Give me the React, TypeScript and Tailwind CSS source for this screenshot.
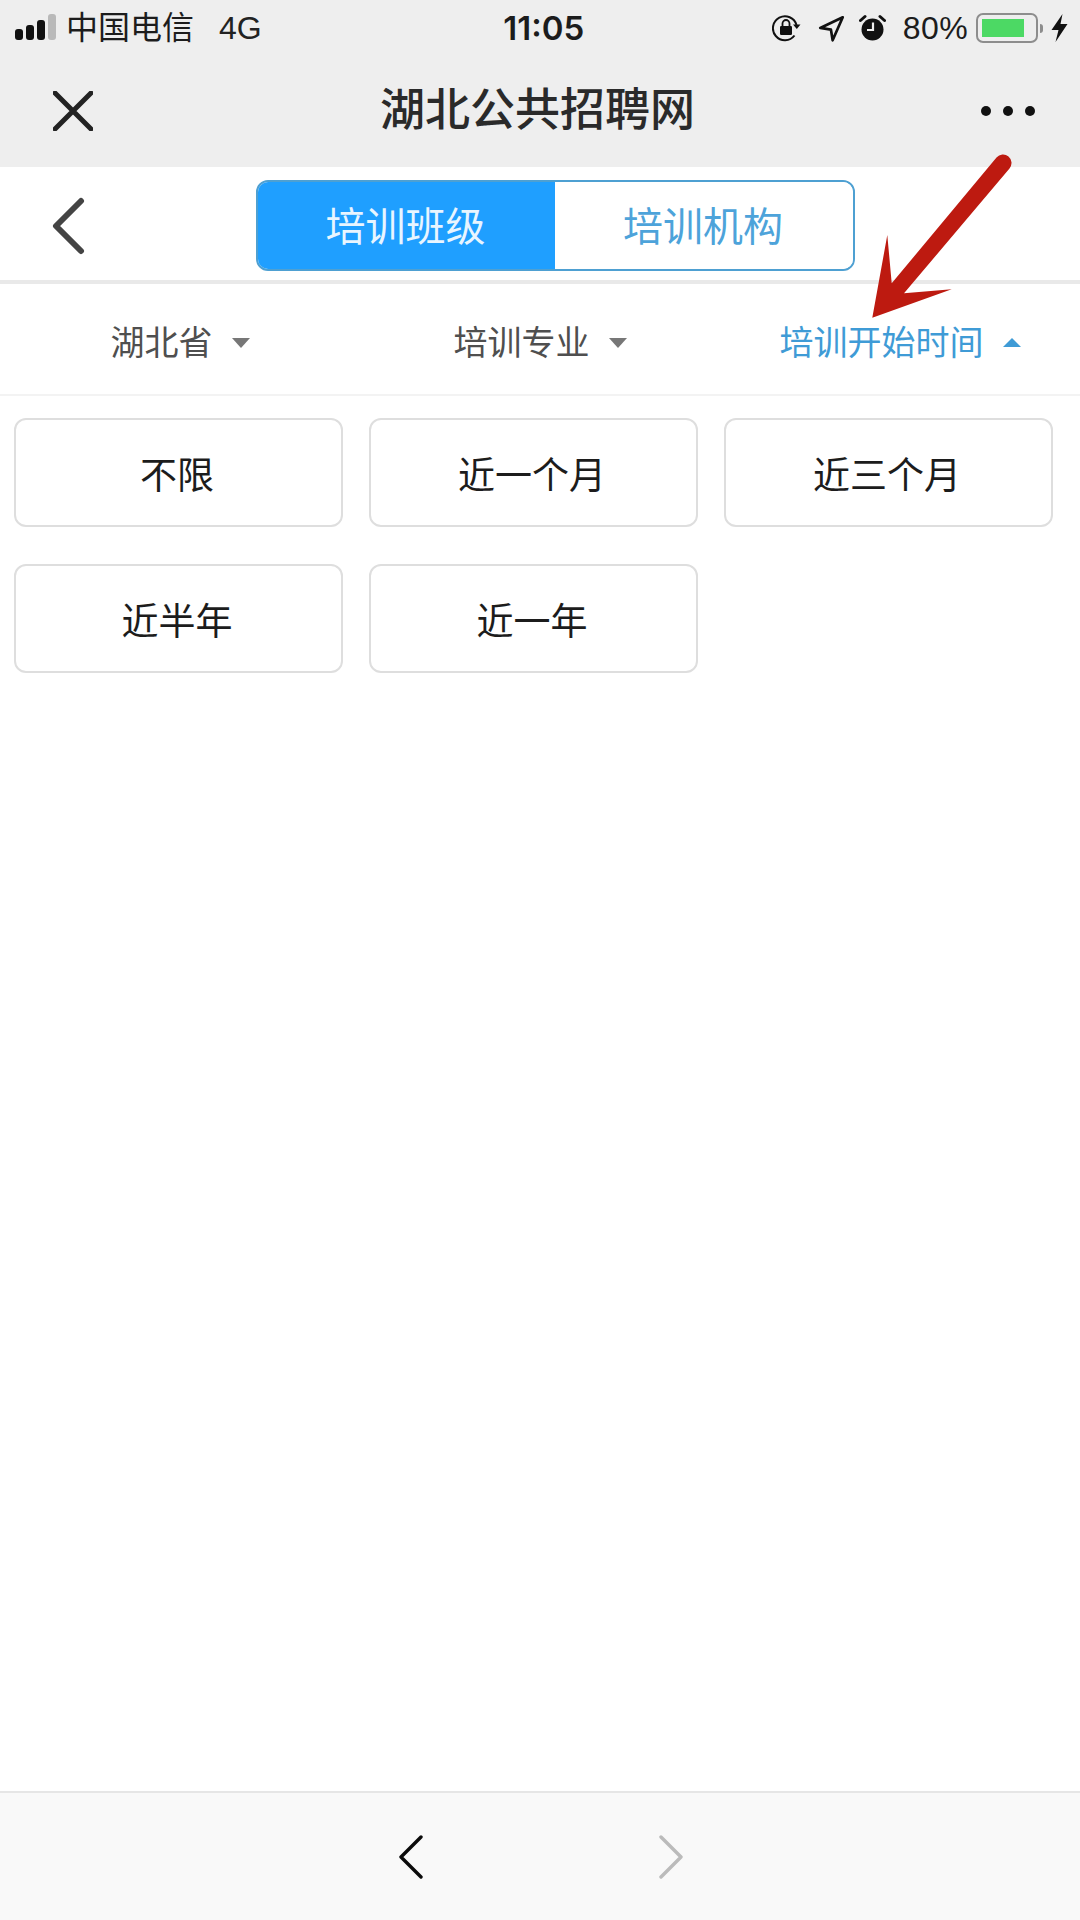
import React from "react";

const FONT = "font-['Liberation_Sans','Noto_Sans_CJK_SC',sans-serif]";

function Caret({ up, color }: { up?: boolean; color: string }) {
  return (
    <svg width="18" height="10" viewBox="0 0 18 10" className="ml-[19px] shrink-0">
      <polygon points={up ? "9,0 18,9 0,9" : "0,0 18,0 9,10"} fill={color} />
    </svg>
  );
}

function Filter({ label, active, up }: { label: string; active?: boolean; up?: boolean }) {
  return (
    <div className="flex items-center justify-center">
      <span className={`text-[34px] leading-none ${active ? "text-[#3f9bd6]" : "text-[#4f4f4f]"}`}>{label}</span>
      <Caret up={up} color={active ? "#3f9bd6" : "#777777"} />
    </div>
  );
}

function Option({ label }: { label: string }) {
  return (
    <div className="flex h-[109px] items-center justify-center rounded-[12px] border-2 border-[#dedede] bg-white pr-[3px] pt-[8px] text-[37px] leading-none text-[#1c1c1c]">
      {label}
    </div>
  );
}

function StatusBar() {
  return (
    <div className="flex h-[54px] items-center pl-[15px] pr-[12px] pt-[2px] text-[32px] leading-none text-[#1c1c1c]">
      <svg width="41" height="28" viewBox="0 0 41 28" className="shrink-0">
        <rect x="0" y="15" width="8" height="11" rx="3" fill="#111" />
        <rect x="11" y="11" width="8" height="15" rx="3" fill="#111" />
        <rect x="22" y="6" width="8" height="20" rx="3" fill="#111" />
        <rect x="33" y="0" width="8" height="26" rx="3" fill="#b9b9b9" />
      </svg>
      <span className="ml-[10px]">中国电信</span>
      <span className="ml-[25px] text-[#222]">4G</span>
      <span className="ml-[240px] w-[84px] whitespace-nowrap text-center font-['Inter',sans-serif] text-[33px] font-semibold">11:05</span>
      <div className="ml-auto flex items-center">
        <svg width="30" height="28" viewBox="0 0 30 28" className="shrink-0">
          <path d="M22.5 21.5A12 12 0 1 1 24.5 11" fill="none" stroke="#111" strokeWidth="2" />
          <path d="M21 10.5h7.5l-3.7 4.6z" fill="#111" />
          <rect x="8" y="12" width="12" height="9" rx="1.2" fill="#111" />
          <path d="M10.5 12V9.5a3.5 3.5 0 0 1 7 0V12" fill="none" stroke="#111" strokeWidth="1.8" />
        </svg>
        <svg width="27" height="27" viewBox="0 0 24 24" className="ml-[16px] shrink-0">
          <path d="M22 2 2 11.5l9.5 1.5L13 22.5z" fill="none" stroke="#111" strokeWidth="2.4" strokeLinejoin="round" />
        </svg>
        <svg width="27" height="28" viewBox="0 0 26 28" className="ml-[14px] shrink-0">
          <path d="M1 6.5 5.5 2.5M25 6.5 20.5 2.5" stroke="#111" strokeWidth="3" strokeLinecap="round" />
          <circle cx="13" cy="15.5" r="11" fill="#111" />
          <path d="M13.5 8.5v7.5H7.5" fill="none" stroke="#eee" strokeWidth="2.2" />
        </svg>
        <span className="ml-[17px] tracking-[0.4px]">80%</span>
        <div className="ml-[8px] h-[30px] w-[62px] rounded-[7px] border-2 border-[#8d8d8d] p-[4px]">
          <div className="h-full w-[42px] bg-[#4cd964]" />
        </div>
        <div className="ml-[2px] h-[9px] w-[3px] rounded-r-sm bg-[#8d8d8d]" />
        <svg width="17" height="28" viewBox="0 0 16 28" className="ml-[8px] shrink-0">
          <polygon points="11,0 0,16 7,16 4,28 16,10 9,10" fill="#111" />
        </svg>
      </div>
    </div>
  );
}

export default function App() {
  return (
    <div className={`relative flex h-[1920px] w-[1080px] flex-col overflow-hidden bg-white ${FONT}`}>
      <div className="h-[167px] shrink-0 bg-[#eeeeee]">
        <StatusBar />
        <div className="flex h-[113px] items-center justify-between pl-[53px] pr-[45px]">
          <svg width="40" height="40" viewBox="0 0 40 40" className="shrink-0">
            <path d="M2 2 38 38M38 2 2 38" stroke="#222" strokeWidth="5" strokeLinecap="round" />
          </svg>
          <span className="ml-[1px] text-[45px] font-medium leading-none text-[#2a2a2a]">湖北公共招聘网</span>
          <div className="flex gap-[12px]">
            <span className="size-[10px] rounded-full bg-[#111]" />
            <span className="size-[10px] rounded-full bg-[#111]" />
            <span className="size-[10px] rounded-full bg-[#111]" />
          </div>
        </div>
      </div>

      <div className="flex h-[117px] shrink-0 items-center border-b-[4px] border-[#e9e9e9] pl-[50px] pt-[4px]">
        <svg width="36" height="58" viewBox="0 0 36 58" className="shrink-0">
          <path d="M31 4 6 29l25 25" fill="none" stroke="#444" strokeWidth="6" strokeLinecap="round" strokeLinejoin="round" />
        </svg>
        <div className="ml-[170px] flex h-[91px] w-[599px] overflow-hidden rounded-[12px] border-2 border-[#4ea0d2]">
          <div className="flex w-[297px] items-center justify-center bg-[#1f9fff] pr-[2px] pt-[3px] text-[40px] leading-none text-[#e8f5ff]">培训班级</div>
          <div className="flex flex-1 items-center justify-center bg-white pr-[2px] pt-[3px] text-[40px] leading-none text-[#4da3da]">培训机构</div>
        </div>
      </div>

      <div className="grid h-[112px] shrink-0 grid-cols-3 items-center border-b-2 border-[#f3f3f3] pt-[8px]">
        <Filter label="湖北省" />
        <Filter label="培训专业" />
        <Filter label="培训开始时间" active up />
      </div>

      <div className="grid flex-1 grid-cols-3 content-start gap-x-[26px] gap-y-[37px] pl-[14px] pr-[27px] pt-[22px]">
        <Option label="不限" />
        <Option label="近一个月" />
        <Option label="近三个月" />
        <Option label="近半年" />
        <Option label="近一年" />
      </div>

      <div className="flex h-[129px] shrink-0 justify-center gap-[236px] border-t-2 border-[#e6e6e6] bg-[#f9f9f9] pl-[2px] pt-[42px]">
        <svg width="24" height="44" viewBox="0 0 24 44" className="shrink-0">
          <path d="M22 2 2 22l20 20" fill="none" stroke="#0b0b0b" strokeWidth="3.4" strokeLinecap="round" strokeLinejoin="round" />
        </svg>
        <svg width="24" height="44" viewBox="0 0 24 44" className="shrink-0">
          <path d="M2 2l20 20L2 42" fill="none" stroke="#bbbbbb" strokeWidth="3.4" strokeLinecap="round" strokeLinejoin="round" />
        </svg>
      </div>

      <svg width="170" height="175" viewBox="0 0 170 175" className="absolute left-[862px] top-[150px]">
        <path
          d="M134.5 7.5A8.5 8.5 0 0 1 147.5 18.5L42 143.3 89.7 139.3 10.3 167.7 25.3 85 29.7 133.3Z"
          fill="#bd1a10"
        />
      </svg>
    </div>
  );
}
